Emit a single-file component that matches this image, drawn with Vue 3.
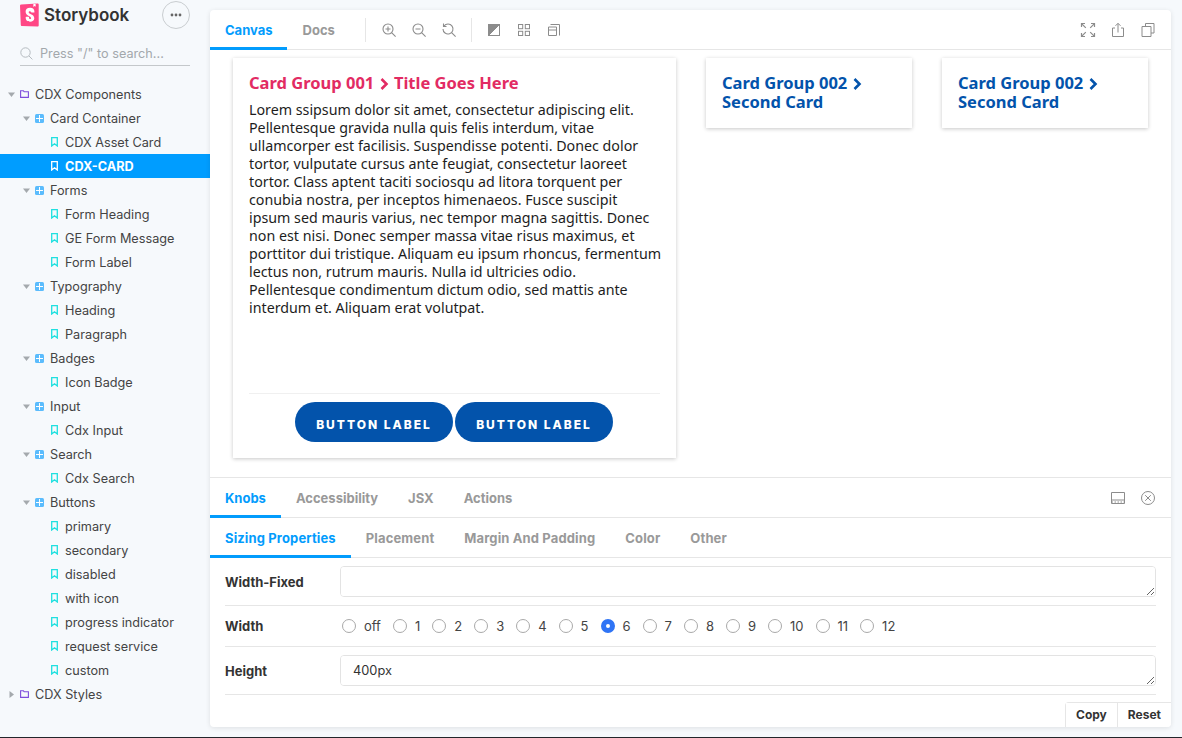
<template>
  <div class="app">
    <aside class="sidebar">
      <div class="brand">
        <svg class="logo" width="19" height="24" viewBox="0 0 19 24">
          <path d="M1.2 1.6 17.6.5c.6 0 1.1.5 1.1 1.1v20.9c0 .6-.5 1.1-1.1 1.1L1.8 23c-.5 0-1-.5-1-1L0 2.8c0-.6.5-1.2 1.2-1.2z" fill="#ff4785" />
          <path d="M13.4 1.1 13.3 3.6c0 .2.2.2.3.1l1-.7.8.6c.1.1.3 0 .3-.1l-.1-2.6z" fill="#fff" />
          <path d="M11.2 9.3c0 .4 2.9.2 3.3-.1 0-2.9-1.6-4.4-4.4-4.4-2.9 0-4.5 1.6-4.5 3.9 0 4.1 5.5 4.2 5.5 6.4 0 .6-.3 1-1 1-.8 0-1.2-.4-1.1-2 0-.4-2.7-.4-3.3 0-.2 3.600 2 4.600 4.400 4.600 2.400 0 4.200-1.200 4.200-3.500 0-4.100-5.600-4-5.600-6 0-.9.6-1 1-1 .4 0 1.100.1 1.500 1.100z" fill="#fff" />
        </svg>
        <span class="brand-name">Storybook</span>
        <span class="menu-btn">
          <svg width="12" height="4" viewBox="0 0 12 4"><circle cx="2" cy="2" r="1.400" /><circle cx="6" cy="2" r="1.400" /><circle cx="10" cy="2" r="1.400" /></svg>
        </span>
      </div>
      <div class="search">
        <svg width="13" height="13" viewBox="0 0 13 13" fill="none" stroke="#b5bbc0"><circle cx="5.500" cy="5.500" r="4.700" /><path d="m9 9 3.400 3.400" /></svg>
        <span>Press "/" to search...</span>
      </div>
      <div class="tree">
        <div
          v-for="row in tree"
          :key="row.label"
          class="row"
          :class="{ selected: row.selected }"
          :style="{ paddingLeft: 8 + row.depth * 15 + 'px' }"
        >
          <span class="arrow-slot">
            <svg v-if="row.kind !== 'story'" width="7" height="7" viewBox="0 0 7 7" fill="#a4a9ad">
              <path v-if="row.closed" d="M1.500 0 6 3.500 1.500 7z" />
              <path v-else d="M0 1.500h7L3.500 6z" />
            </svg>
          </span>
          <svg v-if="row.kind === 'folder'" class="node-icon" width="9" height="8" viewBox="0 0 9 8" fill="none" stroke="#7d4cdb" stroke-width="1.100"><path d="M.6.800h2.800l.8 1H8.400v5.600H.6z" /></svg>
          <svg v-else-if="row.kind === 'comp'" class="node-icon" width="9" height="9" viewBox="0 0 9 9"><rect width="9" height="9" rx="1.500" fill="#5bbcfd" /><path d="M4.500 1v7M1 4.500h7" stroke="#fff" stroke-width="1" /></svg>
          <svg v-else class="node-icon story-icon" width="7" height="10" viewBox="0 0 7 10" fill="none" :stroke="row.selected ? '#fff' : '#1fe0e0'" stroke-width="1.300"><path d="M.7.700h5.600v8.300L3.500 6.800.7 9z" /></svg>
          <span class="row-label">{{ row.label }}</span>
        </div>
      </div>
    </aside>

    <main class="panel">
      <div class="toolbar">
        <div class="tab active">Canvas</div>
        <div class="tab">Docs</div>
        <span class="divider first"></span>
        <svg v-for="icon in zoomIcons" :key="icon" class="tool" width="16" height="16" viewBox="0 0 16 16" fill="none" stroke="#8c8c8c" stroke-width="1.100">
          <path :d="icon" />
        </svg>
        <span class="divider second"></span>
        <svg class="tool" width="16" height="16" viewBox="0 0 16 16" fill="none" stroke="#8c8c8c"><rect x="2.500" y="2.500" width="11" height="11" /><path d="M2.500 13.500v-11h11z" fill="#8c8c8c" /></svg>
        <svg class="tool" width="16" height="16" viewBox="0 0 16 16" fill="none" stroke="#8c8c8c"><rect x="2.500" y="2.500" width="4.200" height="4.200" /><rect x="9.300" y="2.500" width="4.200" height="4.200" /><rect x="2.500" y="9.300" width="4.200" height="4.200" /><rect x="9.300" y="9.300" width="4.200" height="4.200" /></svg>
        <svg class="tool" width="16" height="16" viewBox="0 0 16 16" fill="none" stroke="#8c8c8c"><path d="M4.500 2.500h9v11" /><path d="M2.500 5h8v8.500h-8zM2.500 8h8" /></svg>
        <span class="spacer"></span>
        <svg class="tool end" width="16" height="16" viewBox="0 0 16 16" fill="none" stroke="#8c8c8c" stroke-width="1.200"><path d="M1.500 5v-3.500H5M14.500 5v-3.500H11M1.500 11v3.500H5M14.500 11v3.500H11M1.800 1.800l4 4M14.200 1.800l-4 4M1.800 14.200l4-4M14.200 14.200l-4-4" /></svg>
        <svg class="tool end" width="16" height="16" viewBox="0 0 16 16" fill="none" stroke="#8c8c8c"><path d="M5 6H2.500v8.500h11V6H11M8 10.500V1.500M5.500 3.800 8 1.300l2.500 2.500" /></svg>
        <svg class="tool end" width="16" height="16" viewBox="0 0 16 16" fill="none" stroke="#8c8c8c"><path d="M5.500 4.500v-3h8.500v9.500h-3" /><path d="M2 4.500h9v10H2z" /></svg>
      </div>

      <div class="canvas">
        <section class="card main-card">
          <h2 class="pink">Card Group 001 <svg class="chev" width="9" height="12" viewBox="0 0 9 12" fill="none" stroke="currentColor" stroke-width="2.600"><path d="m1.500 1 5 5-5 5" /></svg> Title Goes Here</h2>
          <p class="lorem">Lorem ssipsum dolor sit amet, consectetur adipiscing elit. Pellentesque gravida nulla quis felis interdum, vitae ullamcorper est facilisis. Suspendisse potenti. Donec dolor tortor, vulputate cursus ante feugiat, consectetur laoreet tortor. Class aptent taciti sociosqu ad litora torquent per conubia nostra, per inceptos himenaeos. Fusce suscipit ipsum sed mauris varius, nec tempor magna sagittis. Donec non est nisi. Donec semper massa vitae risus maximus, et porttitor dui tristique. Aliquam eu ipsum rhoncus, fermentum lectus non, rutrum mauris. Nulla id ultricies odio. Pellentesque condimentum dictum odio, sed mattis ante interdum et. Aliquam erat volutpat.</p>
          <div class="card-foot">
            <button class="pill">BUTTON LABEL</button>
            <button class="pill">BUTTON LABEL</button>
          </div>
        </section>
        <section v-for="n in 2" :key="n" class="card small-card">
          <h2 class="blue">Card Group 002 <svg class="chev" width="9" height="12" viewBox="0 0 9 12" fill="none" stroke="currentColor" stroke-width="2.600"><path d="m1.500 1 5 5-5 5" /></svg><br />Second Card</h2>
        </section>
      </div>

      <div class="addons">
        <div class="addon-tabs">
          <div v-for="(t, i) in addonTabs" :key="t" class="tab" :class="{ active: i === 0 }">{{ t }}</div>
          <span class="spacer"></span>
          <svg class="tool end" width="16" height="16" viewBox="0 0 16 16" fill="none" stroke="#8c8c8c"><path d="M1.500 2.500h13v11h-13z" /><path d="M1.500 10h13" /><path d="M1.500 12h13" stroke-dasharray="1.500 1.500" /></svg>
          <svg class="tool end" width="16" height="16" viewBox="0 0 16 16" fill="none" stroke="#8c8c8c"><circle cx="8" cy="8" r="6.500" /><path d="m5.200 5.200 5.600 5.600M10.800 5.200l-5.600 5.600" /></svg>
        </div>
        <div class="addon-tabs sub">
          <div v-for="(t, i) in knobTabs" :key="t" class="tab" :class="{ active: i === 0 }">{{ t }}</div>
        </div>
        <div class="form">
          <div class="field field-text">
            <label>Width-Fixed</label>
            <textarea class="input" rows="1"></textarea>
          </div>
          <div class="field field-radio">
            <label>Width</label>
            <div class="radios">
              <span v-for="o in widths" :key="o" class="radio-item">
                <span class="radio" :class="{ on: o === '6' }"></span>{{ o }}
              </span>
            </div>
          </div>
          <div class="field field-text">
            <label>Height</label>
            <textarea class="input" rows="1" value="400px"></textarea>
          </div>
        </div>
        <div class="actions">
          <button>Copy</button>
          <button>Reset</button>
        </div>
      </div>
    </main>
  </div>
</template>

<script setup>
const story = (label, selected) => ({ label, depth: 2, kind: 'story', selected })
const comp = (label) => ({ label, depth: 1, kind: 'comp' })

const tree = [
  { label: 'CDX Components', depth: 0, kind: 'folder' },
  comp('Card Container'),
  story('CDX Asset Card'),
  story('CDX-CARD', true),
  comp('Forms'),
  story('Form Heading'),
  story('GE Form Message'),
  story('Form Label'),
  comp('Typography'),
  story('Heading'),
  story('Paragraph'),
  comp('Badges'),
  story('Icon Badge'),
  comp('Input'),
  story('Cdx Input'),
  comp('Search'),
  story('Cdx Search'),
  comp('Buttons'),
  story('primary'),
  story('secondary'),
  story('disabled'),
  story('with icon'),
  story('progress indicator'),
  story('request service'),
  story('custom'),
  { label: 'CDX Styles', depth: 0, kind: 'folder', closed: true },
]

const zoomIcons = [
  'M7 2a5 5 0 1 1 0 10A5 5 0 0 1 7 2zM10.600 10.600l4 4M7 4.500v5M4.500 7h5',
  'M7 2a5 5 0 1 1 0 10A5 5 0 0 1 7 2zM10.600 10.600l4 4M4.500 7h5',
  'M3 4a5 5 0 1 1-1 3M10.600 10.600l4 4M2.500 1.500V4.500h3',
]

const addonTabs = ['Knobs', 'Accessibility', 'JSX', 'Actions']
const knobTabs = ['Sizing Properties', 'Placement', 'Margin And Padding', 'Color', 'Other']
const widths = ['off', '1', '2', '3', '4', '5', '6', '7', '8', '9', '10', '11', '12']
</script>

<style>
html, body { margin: 0; background: #f6f9fc; }
</style>

<style scoped>
.app {
  display: flex;
  height: 737px;
  border-bottom: 1px solid #23262b;
  background: #f6f9fc;
  font-family: Inter, "Liberation Sans", sans-serif;
  color: #333;
  overflow: hidden;
}

.sidebar {
  width: 210px;
  flex: none;
  font-size: 12.700px;
}
.brand {
  display: flex;
  align-items: center;
  height: 30px;
  padding: 0 20px;
}
.logo { flex: none; }
.brand-name {
  margin-left: 5px;
  font-size: 17px;
  font-weight: 600;
  color: #333;
}
.menu-btn {
  margin-left: auto;
  width: 28px;
  height: 28px;
  box-sizing: border-box;
  border: 1px solid #c9cdd0;
  border-radius: 50%;
  display: flex;
  align-items: center;
  justify-content: center;
}
.menu-btn svg { fill: #666; }
.search {
  margin: 12px 20px 0;
  height: 24px;
  box-sizing: border-box;
  border-bottom: 1px solid #c4c8cb;
  display: flex;
  align-items: center;
  gap: 7px;
  color: #a3a8ac;
  padding-bottom: 1px;
}
.tree { margin-top: 16px; }
.row {
  height: 24px;
  display: flex;
  align-items: center;
  color: #444;
}
.row.selected {
  background: #009dff;
  color: #fff;
  font-weight: 700;
}
.arrow-slot {
  width: 12px;
  flex: none;
  display: flex;
}
.node-icon { flex: none; margin-right: 6px; }
.story-icon { margin-left: 1px; margin-right: 7px; }

.panel {
  flex: 1;
  margin: 10px 11px 10px 0;
  background: #fff;
  border-radius: 4px;
  box-shadow: 0 1px 5px rgba(0, 0, 0, .1);
  display: flex;
  flex-direction: column;
  overflow: hidden;
}
.toolbar, .addon-tabs {
  display: flex;
  align-items: center;
  height: 40px;
  flex: none;
  box-sizing: border-box;
  border-bottom: 1px solid #e6e6e6;
}
.tab {
  height: 40px;
  box-sizing: border-box;
  padding: 0 15px;
  display: flex;
  align-items: center;
  font-size: 13px;
  font-weight: 700;
  color: #999;
  border-bottom: 3px solid transparent;
  padding-top: 2px;
  margin-bottom: -1px;
}
.tab.active {
  color: #029cfd;
  border-bottom-color: #029cfd;
}
.toolbar .tab.active { padding-right: 14px; margin-right: 1px; }
.sub .tab { letter-spacing: .13px; }
.divider {
  width: 1px;
  height: 24px;
  background: #e6e6e6;
}
.divider.first { margin-left: 15px; margin-right: 8px; }
.divider.second { margin-left: 7px; margin-right: 7px; }
.tool { margin: 0 7px; flex: none; }
.spacer { flex: 1; }
.end { margin: 0 7px; }
.toolbar .end:last-child, .addon-tabs .end:last-child { margin-right: 15px; }

.canvas {
  height: 427px;
  flex: none;
  box-sizing: border-box;
  padding: 8px 23px;
  display: flex;
  align-items: flex-start;
  gap: 30px;
  font-family: "Noto Sans", "Open Sans", sans-serif;
}
.card {
  background: #fff;
  box-shadow: 0 1px 4px rgba(0, 0, 0, .22);
  box-sizing: border-box;
  padding: 15px 16px 16px;
}
.main-card {
  width: 443px;
  height: 400px;
  display: flex;
  flex-direction: column;
}
.small-card {
  width: 206px;
  height: 70px;
}
h2 {
  margin: 0;
  font-size: 16.500px;
  line-height: 19px;
  font-weight: 700;
}
.chev { margin: 0 1px; vertical-align: -1px; }
.pink { color: #e22b63; }
.blue { color: #0353ab; }
.lorem {
  margin: 9px -1.500px 0 0;
  font-size: 14.250px;
  line-height: 18px;
  color: #1d1d1d;
  flex: 1;
}
.card-foot {
  border-top: 1px solid #f0f0f0;
  padding: 8px 1px 0 0;
  display: flex;
  justify-content: center;
  gap: 2px;
}
.pill {
  width: 158px;
  height: 40px;
  border: none;
  border-radius: 20px;
  background: #0353ab;
  color: #fff;
  padding-top: 5px;
  font-family: Inter, sans-serif;
  font-size: 12px;
  font-weight: 800;
  letter-spacing: 2px;
}

.addons {
  flex: 1;
  display: flex;
  flex-direction: column;
  border-top: 1px solid #e6e6e6;
  position: relative;
}
.form { padding: 0 15px; }
.field {
  display: flex;
  align-items: center;
  border-bottom: 1px solid #e6e6e6;
  font-size: 13px;
}
.field label {
  width: 115px;
  flex: none;
  font-weight: 700;
  color: #333;
}
.field-text { height: 48px; box-sizing: border-box; }
.field-radio { height: 41px; box-sizing: border-box; }
.input {
  flex: 1;
  height: 31px;
  box-sizing: border-box;
  border: 1px solid #e3e3e3;
  border-radius: 4px;
  padding: 7px 12px;
  font: 12.800px/16px Inter, sans-serif;
  color: #333;
  outline: none;
  background: #fff;
}
.radios {
  display: flex;
  align-items: center;
  gap: 12px;
  color: #444;
  padding-left: 2px;
  font-size: 13px;
}
.radio-item {
  display: flex;
  align-items: center;
  gap: 8px;
}
.radio {
  width: 14px;
  height: 14px;
  box-sizing: border-box;
  border: 1px solid #a9a9a9;
  border-radius: 50%;
}
.radio.on {
  border: 5px solid #2f74f5;
  background: #fff;
}
.actions {
  position: absolute;
  right: 0;
  bottom: 0;
  display: flex;
  border: 1px solid #e6e6e6;
  border-width: 1px 0 0 1px;
  border-top-left-radius: 4px;
}
.actions button {
  height: 24px;
  border: none;
  background: #fff;
  padding: 0 10px 2px;
  font: 700 12px Inter, sans-serif;
  color: #333;
}
.actions button + button { border-left: 1px solid #e6e6e6; }
</style>
